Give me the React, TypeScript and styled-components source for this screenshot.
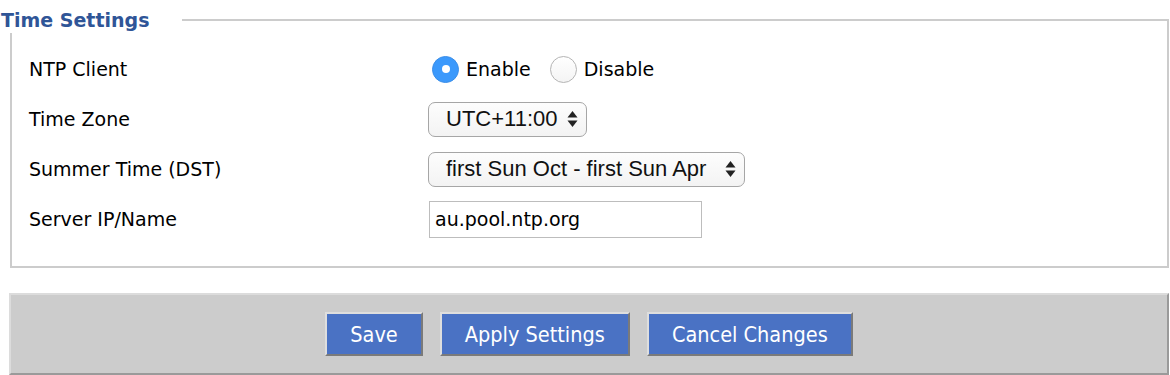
import React, { useState } from 'react'
import styled, { createGlobalStyle } from 'styled-components'

const GlobalStyle = createGlobalStyle`
  html, body {
    margin: 0;
    padding: 0;
    background: #ffffff;
  }
  body {
    font-family: "DejaVu Sans", Verdana, sans-serif;
    color: #000;
  }
`

const Page = styled.div`
  width: 1170px;
  height: 375px;
  overflow: hidden;
  padding-top: 7px;
  box-sizing: border-box;
`

const Fieldset = styled.fieldset`
  margin: 0 1px 0 10px;
  padding: 11px 0 22px 17px;
  border: 2px solid #cccccc;
  min-width: 0;
`

const Legend = styled.legend`
  margin-left: -28px;
  padding: 0 33px 0 0;
  font-size: 19px;
  font-weight: bold;
  line-height: 26px;
  color: #2f5597;
`

const Row = styled.div`
  display: grid;
  grid-template-columns: 399px 1fr;
  align-items: center;
  height: 50px;
`

const Label = styled.div`
  font-size: 19px;
`

const RadioGroup = styled.div`
  display: flex;
  align-items: center;
  margin-left: 4px;
`

const RadioOption = styled.label`
  display: flex;
  align-items: center;
  font-size: 19px;
  cursor: pointer;
  margin-right: 19px;
`

const RadioDot = styled.span<{ $checked: boolean }>`
  width: 27px;
  height: 27px;
  border-radius: 50%;
  box-sizing: border-box;
  margin-right: 7px;
  display: flex;
  align-items: center;
  justify-content: center;
  background: ${p => (p.$checked ? '#3b99fc' : 'linear-gradient(#ffffff, #f4f4f4)')};
  border: 1px solid ${p => (p.$checked ? '#3b8ee8' : '#b4b4b4')};
  &::after {
    content: '';
    display: ${p => (p.$checked ? 'block' : 'none')};
    width: 8px;
    height: 8px;
    border-radius: 50%;
    background: #ffffff;
  }
`

const SelectBox = styled.div<{ $gap: number }>`
  display: inline-flex;
  align-items: center;
  height: 35px;
  box-sizing: border-box;
  padding: 0 8px 0 17px;
  border: 1px solid #a6a6a6;
  border-radius: 7px;
  background: linear-gradient(#fdfdfd, #f3f3f3);
  font-family: "Liberation Sans", Arial, sans-serif;
  font-size: 22px;
  color: #111;
  gap: ${p => p.$gap}px;
`

const SelectWrap = styled.div`
  display: flex;
`

const Arrows = () => (
  <svg width="11" height="18" viewBox="0 0 11 18">
    <path d="M5.5 1 L10.5 7.5 H0.5 Z" fill="#222" />
    <path d="M5.5 17 L10.5 10.5 H0.5 Z" fill="#222" />
  </svg>
)

const TextInput = styled.input`
  width: 273px;
  height: 37px;
  box-sizing: border-box;
  border: 1px solid #bdbdbd;
  padding: 0 5px;
  font-family: "DejaVu Sans", Verdana, sans-serif;
  font-size: 19px;
  color: #000;
  outline: none;
  margin-left: 1px;
`

const ButtonBar = styled.div`
  margin: 25px 1px 0 9px;
  height: 82px;
  box-sizing: border-box;
  background: #cccccc;
  border-top: 2px solid #dcdcdc;
  border-left: 2px solid #dcdcdc;
  border-right: 2px solid #9a9a9a;
  border-bottom: 2px solid #9a9a9a;
  display: flex;
  justify-content: center;
  align-items: flex-start;
  padding-top: 17px;
  gap: 17px;
`

const Button = styled.button`
  height: 44px;
  padding: 0 23px;
  background: #4a72c4;
  color: #ffffff;
  font-family: "DejaVu Sans Condensed", "DejaVu Sans", sans-serif;
  font-size: 21.5px;
  border-top: 2px solid #dedede;
  border-left: 2px solid #dedede;
  border-right: 2px solid #7a7a7a;
  border-bottom: 2px solid #7a7a7a;
  cursor: pointer;
`

const App = () => {
  const [ntp, setNtp] = useState(true)

  return <>
    <GlobalStyle />
    <Page>
      <Fieldset>
        <Legend>Time Settings</Legend>
        <Row>
          <Label>NTP Client</Label>
          <RadioGroup>
            <RadioOption onClick={() => setNtp(true)}>
              <RadioDot $checked={ntp} />Enable
            </RadioOption>
            <RadioOption onClick={() => setNtp(false)}>
              <RadioDot $checked={!ntp} />Disable
            </RadioOption>
          </RadioGroup>
        </Row>
        <Row>
          <Label>Time Zone</Label>
          <SelectWrap>
            <SelectBox $gap={10}>UTC+11:00<Arrows /></SelectBox>
          </SelectWrap>
        </Row>
        <Row>
          <Label>Summer Time (DST)</Label>
          <SelectWrap>
            <SelectBox $gap={19}>first Sun Oct - first Sun Apr<Arrows /></SelectBox>
          </SelectWrap>
        </Row>
        <Row>
          <Label>Server IP/Name</Label>
          <SelectWrap>
            <TextInput defaultValue="au.pool.ntp.org" />
          </SelectWrap>
        </Row>
      </Fieldset>
      <ButtonBar>
        <Button>Save</Button>
        <Button>Apply Settings</Button>
        <Button>Cancel Changes</Button>
      </ButtonBar>
    </Page>
  </>
}

export default App
